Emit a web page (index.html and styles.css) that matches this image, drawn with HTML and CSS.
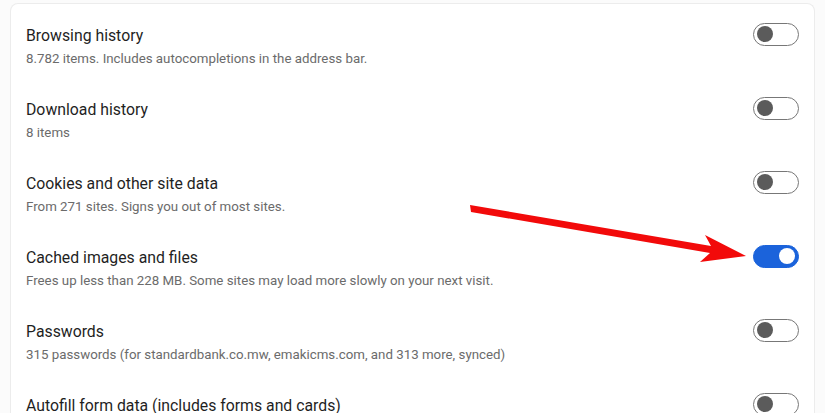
FILE: index.html
```html
<!DOCTYPE html>
<html lang="en">
<head>
    <meta charset="UTF-8">
    <meta name="viewport" content="width=device-width, initial-scale=1.0">
    <title>Clear browsing data</title>
    <link rel="stylesheet" href="styles.css">
</head>
<body>
    <div class="card">
        <div class="row">
            <div class="text">
                <div class="title">Browsing history</div>
                <div class="sub">8.782 items. Includes autocompletions in the address bar.</div>
            </div>
            <span class="toggle"></span>
        </div>
        <div class="row">
            <div class="text">
                <div class="title">Download history</div>
                <div class="sub">8 items</div>
            </div>
            <span class="toggle"></span>
        </div>
        <div class="row">
            <div class="text">
                <div class="title">Cookies and other site data</div>
                <div class="sub">From 271 sites. Signs you out of most sites.</div>
            </div>
            <span class="toggle"></span>
        </div>
        <div class="row">
            <div class="text">
                <div class="title">Cached images and files</div>
                <div class="sub">Frees up less than 228 MB. Some sites may load more slowly on your next visit.</div>
            </div>
            <span class="toggle on"></span>
        </div>
        <div class="row">
            <div class="text">
                <div class="title">Passwords</div>
                <div class="sub">315 passwords (for standardbank.co.mw, emakicms.com, and 313 more, synced)</div>
            </div>
            <span class="toggle"></span>
        </div>
        <div class="row">
            <div class="text">
                <div class="title">Autofill form data (includes forms and cards)</div>
            </div>
            <span class="toggle"></span>
        </div>

        <!-- annotation arrow drawn over the list -->
        <svg class="arrow" width="825" height="413" viewBox="0 0 825 413">
            <polygon fill="#f20a0a" points="470,205 471,212 710,253 700,262 746,256 705,235 711,246" />
        </svg>
    </div>
</body>
</html>
```

FILE: styles.css
```css
body {
    margin: 0;
    padding: 0;
    background-color: #fbfbfb;
    font-family: Roboto, "Liberation Sans", Arial, sans-serif;
    height: 413px;
    overflow: hidden;
}
.card {
    margin: 3px 10px 0 10px;
    background-color: #fff;
    border: 1px solid #ececec;
    border-bottom: none;
    border-radius: 8px 8px 0 0;
    height: 409px;
    overflow: hidden;
}
.row {
    display: flex;
    justify-content: space-between;
    align-items: flex-start;
    height: 74px;
    padding: 21px 15px 0 15px;
    box-sizing: border-box;
}
.title {
    font-size: 15.8px;
    line-height: 22px;
    color: #1f1f1f;
}
.sub {
    font-size: 13.3px;
    line-height: 24px;
    color: #6b6b6b;
}
.toggle {
    position: relative;
    width: 46px;
    height: 23px;
    margin-top: -2px;
    box-sizing: border-box;
    border: 1.5px solid #777;
    border-radius: 12px;
    background-color: #fff;
    flex-shrink: 0;
}
.toggle::after {
    content: "";
    position: absolute;
    left: 3px;
    top: 2px;
    width: 16px;
    height: 16px;
    border-radius: 50%;
    background-color: #5b5b5b;
}
.toggle.on {
    background-color: #1b63db;
    border-color: #1b63db;
}
.toggle.on::after {
    left: auto;
    right: 3px;
    background-color: #fff;
}
.arrow {
    position: absolute;
    left: 0;
    top: 0;
    pointer-events: none;
}
```
